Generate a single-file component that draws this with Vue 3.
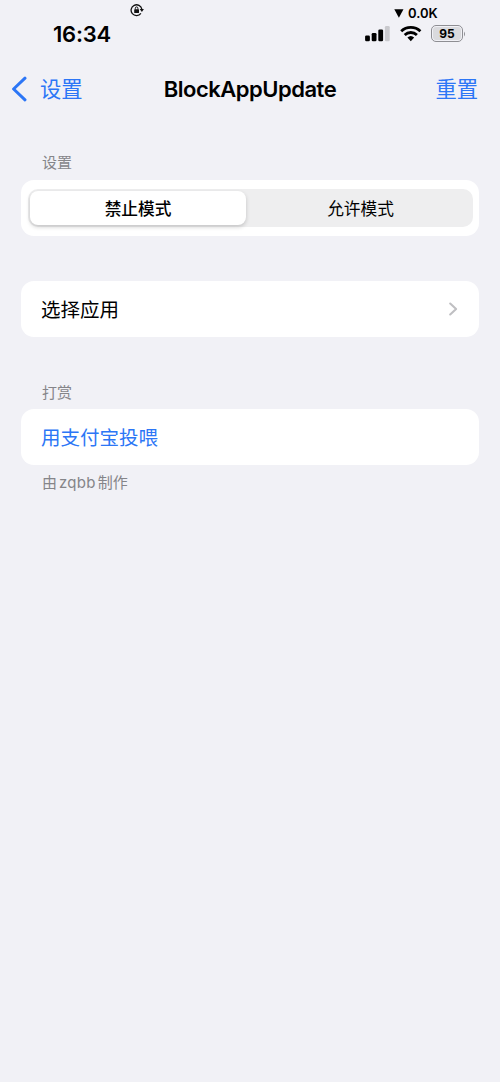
<script setup>
import { ref } from 'vue'

const modes = ['禁止模式', '允许模式']
const selected = ref(0)
</script>

<template>
  <div class="screen">
    <header class="status">
      <div class="status-left">
        <svg class="lock" width="14" height="14" viewBox="0 0 14 14">
          <path d="M10.9 10.3A5.4 5.4 0 1 1 11.8 6.2" fill="none" stroke="#111" stroke-width="1.3" />
          <path d="M9.7 6.1h4.2L11.9 8.9z" fill="#111" />
          <rect x="4.2" y="6.3" width="4.8" height="3.7" rx=".6" fill="#111" />
          <path d="M5.3 6.6V5.4a1.3 1.5 0 0 1 2.6 0v1.2" fill="none" stroke="#111" stroke-width="1" />
        </svg>
        <span class="time">16:34</span>
      </div>
      <div class="status-right">
        <div class="speed">
          <svg width="10" height="9" viewBox="0 0 10 9"><path d="M.3.2h9.2L4.9 8.8z" fill="#000" /></svg>
          <span>0.0K</span>
        </div>
        <div class="indicators">
          <svg width="26" height="17" viewBox="0 0 26 17">
            <rect x="1.1" y="10.5" width="4.8" height="5.8" rx="1.3" />
            <rect x="7.7" y="8" width="4.8" height="8.3" rx="1.3" />
            <rect x="14.3" y="4.5" width="4.8" height="11.8" rx="1.3" />
            <rect x="20.9" y="1" width="4.8" height="15.3" rx="1.3" fill="#c9c9cd" />
          </svg>
          <svg class="wifi" width="22" height="17" viewBox="0 0 22 17">
            <g fill="none" stroke="#000" stroke-width="2.8">
              <path d="M1.2 6.2a14 14 0 0 1 19.2 0" />
              <path d="M4.7 9.9a8.9 8.9 0 0 1 12.2 0" />
            </g>
            <path d="M7.4 12.6a5 5 0 0 1 6.8 0L10.8 16.2z" />
          </svg>
          <div class="battery"><span>95</span></div>
          <svg class="cap" width="2" height="6" viewBox="0 0 2 6"><path d="M0 .5q2 2.5 0 5z" fill="#8e8e93" /></svg>
        </div>
      </div>
    </header>

    <nav class="nav">
      <button class="back">
        <svg width="16" height="26" viewBox="0 0 16 26">
          <path d="M14 2.2 2.6 13 14 23.8" fill="none" stroke="#2c76f6" stroke-width="3" stroke-linecap="round" stroke-linejoin="round" />
        </svg>
        <span>设置</span>
      </button>
      <h1>BlockAppUpdate</h1>
      <button class="reset">重置</button>
    </nav>

    <main>
      <h2>设置</h2>
      <section class="card mode-card">
        <div class="segments">
          <button
            v-for="(mode, i) in modes"
            :key="mode"
            :class="['segment', { active: selected === i }]"
            @click="selected = i"
          >{{ mode }}</button>
        </div>
      </section>

      <section class="card row apps">
        <span>选择应用</span>
        <svg width="10" height="14" viewBox="0 0 10 14">
          <path d="M2.2 1.5 8.1 7l-5.9 5.5" fill="none" stroke="#bfbfc2" stroke-width="2.1" stroke-linecap="round" stroke-linejoin="round" />
        </svg>
      </section>

      <h2 class="donate-title">打赏</h2>
      <section class="card row donate"><span>用支付宝投喂</span></section>
      <p class="footer">由<span>zqbb</span>制作</p>
    </main>
  </div>
</template>

<style>
body {
  margin: 0;
  background: #f1f1f6;
}
</style>

<style scoped>
.screen {
  width: 500px;
  height: 1082px;
  overflow: hidden;
  background: #f1f1f6;
  color: #000;
  font-family: Inter, "Noto Sans CJK SC", sans-serif;
}
button {
  margin: 0;
  padding: 0;
  border: 0;
  background: none;
  font: inherit;
  color: inherit;
}
.status {
  display: flex;
  justify-content: space-between;
  height: 60px;
}
.status-left {
  display: flex;
  flex-direction: column;
  width: 160px;
}
.lock {
  margin: 3px 0 0 130px;
}
.time {
  margin: 3px 0 0 53px;
  font-size: 22px;
  line-height: 28px;
  font-weight: 600;
  letter-spacing: -0.2px;
}
.status-right {
  width: 136px;
}
.speed {
  display: flex;
  align-items: center;
  gap: 4px;
  height: 16px;
  margin: 5px 0 0 30px;
  font-size: 13px;
  font-weight: 600;
}
.indicators {
  display: flex;
  align-items: center;
  height: 17px;
  margin-top: 4px;
}
.indicators > svg {
  flex: none;
}
.wifi {
  margin-left: 10px;
}
.battery {
  display: flex;
  box-sizing: border-box;
  width: 32px;
  height: 17px;
  margin-left: 9px;
  padding: 1px;
  border: 1px solid #8e8e93;
  border-radius: 5px;
}
.battery span {
  flex: 1;
  border-radius: 3px;
  background: #dadadd;
  font-size: 12px;
  line-height: 13px;
  font-weight: 700;
  text-align: center;
}
.cap {
  margin-left: 1px;
}
.nav {
  display: grid;
  grid-template-columns: 1fr auto 1fr;
  align-items: center;
  height: 58px;
  padding: 0 22px 0 11px;
  color: #2c76f6;
  font-size: 21.3px;
}
.back {
  display: flex;
  align-items: center;
  gap: 13px;
}
.back span,
.reset {
  padding-bottom: 3px;
}
h1 {
  margin: 0 0 0 11px;
  color: #000;
  font-size: 22px;
  line-height: 28px;
  font-weight: 600;
  letter-spacing: -0.5px;
}
.reset {
  justify-self: end;
}
main {
  padding: 33px 21px 0;
}
h2 {
  margin: 0;
  padding: 0 21px;
  color: #858589;
  font-size: 15px;
  line-height: 24px;
  font-weight: 400;
}
.card {
  box-sizing: border-box;
  height: 56px;
  border-radius: 13px;
  background: #fff;
}
.mode-card {
  margin-top: 5px;
  padding: 9px 6px 9px 7px;
}
.segments {
  display: flex;
  box-sizing: border-box;
  height: 38px;
  padding: 2px;
  border-radius: 10px;
  background: #eeeeef;
}
.segment {
  flex: 1;
  padding-left: 4px;
  border-radius: 8px;
  font-size: 16.7px;
}
.segment.active {
  flex: 0 0 216px;
  padding: 0;
  background: #fff;
  box-shadow: 0 2px 4px #0000002e;
  font-weight: 500;
}
.row {
  display: flex;
  align-items: center;
  justify-content: space-between;
  padding: 0 21px 0 20px;
  font-size: 19.5px;
}
.row span {
  padding-bottom: 1px;
}
.apps {
  margin-top: 45px;
}
.donate-title {
  margin-top: 44px;
}
.donate {
  margin-top: 4px;
  color: #2c76f6;
}
.footer {
  margin: 6px 0 0;
  padding: 0 21px;
  color: #858589;
  font-size: 15px;
  line-height: 24px;
}
.footer span {
  margin: 0 2px;
  letter-spacing: 0.25px;
}
</style>
